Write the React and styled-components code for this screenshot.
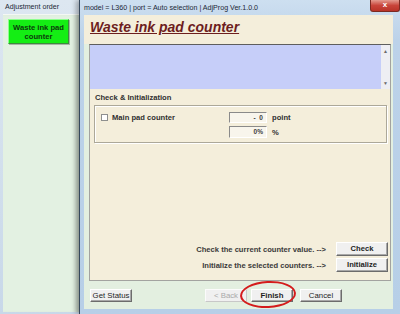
import React from 'react';
import styled, { createGlobalStyle } from 'styled-components';

const GlobalStyle = createGlobalStyle`
  html, body {
    margin: 0;
    padding: 0;
  }
  body {
    width: 400px;
    height: 314px;
    overflow: hidden;
    background: #7d9cc0;
    font-family: "Liberation Sans", Arial, sans-serif;
  }
`;

const Desktop = styled.div`
  display: flex;
  width: 400px;
  height: 314px;
`;

// left window : "Adjustment order"
const LeftWindow = styled.div`
  width: 79px;
  flex-shrink: 0;
  display: flex;
  flex-direction: column;
  box-sizing: border-box;
  padding: 0 0 2px 3px;
  background: linear-gradient(#dde7f1, #c8d8e9);
`;

const TitleBar = styled.div`
  height: ${p => p.h}px;
  flex-shrink: 0;
  display: flex;
  align-items: center;
  padding-left: ${p => p.pad}px;
  font-size: 7.1px;
  color: #1c2836;
  white-space: nowrap;
`;

const LeftBody = styled.div`
  flex: 1;
  background: #e3f1e2;
  border-top: 1px solid #f4f8f4;
  padding: 4px 0 0 5px;
  box-shadow: inset -5px 0 5px -3px rgba(0, 0, 0, 0.15);
`;

const OrderButton = styled.div`
  width: 61px;
  height: 25px;
  box-sizing: border-box;
  padding-top: 3px;
  background: #14ee14;
  border: 1px solid;
  border-color: #8dff8d #3d8a3d #3d8a3d #8dff8d;
  box-shadow: 1px 1px 0 #a5b4a5;
  color: #0c3a0c;
  font-size: 7.6px;
  font-weight: bold;
  line-height: 9px;
  text-align: center;
`;

// right window : the wizard
const RightWindow = styled.div`
  flex: 1;
  position: relative;
  z-index: 1;
  display: flex;
  flex-direction: column;
  background: linear-gradient(#cddff0, #bcd2e9 40px, #b7cfe7);
  border-left: 1px solid #36485c;
  box-shadow: -3px 0 5px rgba(0, 0, 0, 0.3);
`;

const CloseButton = styled.div`
  width: 30px;
  height: 12px;
  align-self: flex-start;
  margin-left: auto;
  background: linear-gradient(#e49b8f, #c8443a 50%, #b93328);
  border: 1px solid #7b2a22;
  border-top: none;
  border-radius: 0 0 3px 3px;
  box-sizing: border-box;
  color: #fff;
  font-size: 8px;
  font-weight: bold;
  line-height: 10px;
  text-align: center;
`;

const Body = styled.div`
  flex: 1;
  margin: 0 7px 5px 4px;
  display: flex;
  flex-direction: column;
  background: #e3efe0;
`;

const Header = styled.div`
  height: 29px;
  box-sizing: border-box;
  padding: 4px 0 0 6px;
  background: #f4eedb;
`;

const Title = styled.div`
  font-size: 14px;
  font-weight: bold;
  font-style: italic;
  text-decoration: underline;
  line-height: 16px;
  color: #6d1e1e;
`;

const Main = styled.div`
  flex: 1;
  display: flex;
  padding: 0 2px 0 5px;
`;

const Panel = styled.div`
  flex: 1;
  display: flex;
  flex-direction: column;
  background: #f4eedb;
  border: 1px solid #a3a3a0;
  border-top-color: #5e5e5e;
`;

const Memo = styled.div`
  height: 44px;
  flex-shrink: 0;
  display: flex;
  justify-content: flex-end;
  background: #c6cef9;
`;

const ScrollBar = styled.div`
  width: 9px;
  display: flex;
  flex-direction: column;
  justify-content: space-between;
  align-items: center;
  background: #eeeef3;
  color: #6a6a6a;
  font-size: 5px;
  line-height: 8px;
  padding: 2px 0;
  box-sizing: border-box;
`;

const GroupLabel = styled.div`
  margin: 4px 0 0 5px;
  font-size: 7.6px;
  font-weight: bold;
  line-height: 9px;
  color: #303030;
`;

const Group = styled.div`
  margin: 3px 3px 0 4px;
  height: 38px;
  box-sizing: border-box;
  padding: 6px 0 0 6px;
  border: 1px solid #aca899;
  box-shadow: inset 1px 1px 0 #fff, 1px 1px 0 #fff;
  display: grid;
  grid-template-columns: 7px 113px 38px auto;
  grid-template-rows: 11px 12px;
  column-gap: 4px;
  row-gap: 3px;
  align-items: center;
  align-content: start;
`;

const CheckBox = styled.div`
  width: 7px;
  height: 7px;
  box-sizing: border-box;
  background: #fff;
  border: 1px solid #8e8f8f;
`;

const Label = styled.div`
  font-size: 7.6px;
  font-weight: bold;
  color: #303030;
  white-space: nowrap;
`;

const Field = styled.div`
  grid-column: 3;
  height: ${p => p.h}px;
  box-sizing: border-box;
  padding-right: 3px;
  background: #f8f5ec;
  border: 1px solid;
  border-color: #8a8a8a #ffffff #ffffff #8a8a8a;
  font-size: 6.5px;
  font-weight: bold;
  color: #404040;
  text-align: right;
  line-height: ${p => p.h - 2}px;
  white-space: pre;
`;

const Unit = styled(Label)`
  grid-column: 4;
  padding-left: 1px;
`;

const Actions = styled.div`
  margin-top: auto;
  padding: 0 2px 8px 0;
  display: grid;
  grid-template-columns: auto 52px;
  column-gap: 10px;
  row-gap: 2px;
  justify-content: end;
  align-items: center;
`;

const Hint = styled.div`
  font-size: 7.6px;
  font-weight: bold;
  color: #3a3a3a;
  text-align: right;
  white-space: nowrap;
`;

const Button = styled.div`
  width: ${p => p.w}px;
  height: ${p => p.h}px;
  box-sizing: border-box;
  background: #f0f0f0;
  border: 1px solid;
  border-color: ${p => (p.disabled ? '#fbfbfb #c8c8c8 #c8c8c8 #fbfbfb' : '#ffffff #6c6c6c #6c6c6c #ffffff')};
  box-shadow: ${p => (p.disabled ? 'none' : 'inset -1px -1px 0 #a8a8a8')};
  color: ${p => (p.disabled ? '#a9a9a9' : '#1e1e1e')};
  font-size: ${p => p.fs || 7.6}px;
  font-weight: ${p => (p.bold ? 'bold' : 'normal')};
  line-height: ${p => p.h - 2}px;
  text-align: center;
  white-space: nowrap;
  margin-left: ${p => p.ml || 0}px;
`;

const Footer = styled.div`
  height: 28px;
  flex-shrink: 0;
  position: relative;
  display: flex;
  align-items: center;
  padding-left: 6px;
`;

const Marker = styled.div`
  position: absolute;
  left: 156px;
  top: 0px;
  width: 56px;
  height: 27px;
  box-sizing: border-box;
  border: 2px solid #d41c1c;
  border-radius: 50%;
  transform: rotate(-3deg);
  pointer-events: none;
`;

export default function App() {
  return (
    <Desktop>
      <GlobalStyle />
      <LeftWindow>
        <TitleBar h={14} pad={2}>Adjustment order</TitleBar>
        <LeftBody>
          <OrderButton>Waste ink pad<br />counter</OrderButton>
        </LeftBody>
      </LeftWindow>

      <RightWindow>
        <TitleBar h={15} pad={4}>
          model = L360 | port = Auto selection | AdjProg Ver.1.0.0
          <CloseButton>x</CloseButton>
        </TitleBar>
        <Body>
          <Header>
            <Title>Waste ink pad counter</Title>
          </Header>
          <Main>
            <Panel>
              <Memo>
                <ScrollBar>
                  <span>▲</span>
                  <span>▼</span>
                </ScrollBar>
              </Memo>
              <GroupLabel>Check &amp; Initialization</GroupLabel>
              <Group>
                <CheckBox />
                <Label>Main pad counter</Label>
                <Field h={11}>{'-  0'}</Field>
                <Unit>point</Unit>
                <Field h={12}>0%</Field>
                <Unit>%</Unit>
              </Group>
              <Actions>
                <Hint>Check the current counter value. --&gt;</Hint>
                <Button w={52} h={14} bold>Check</Button>
                <Hint>Initialize the selected counters. --&gt;</Hint>
                <Button w={52} h={14} bold>Initialize</Button>
              </Actions>
            </Panel>
          </Main>
          <Footer>
            <Button w={42} h={13} fs={7.8}>Get Status</Button>
            <Button w={42} h={13} fs={7.8} ml={73} disabled>&lt; Back</Button>
            <Button w={42} h={13} fs={7.8} ml={4} bold>Finish</Button>
            <Button w={42} h={13} fs={7.8} ml={7}>Cancel</Button>
            <Marker />
          </Footer>
        </Body>
      </RightWindow>
    </Desktop>
  );
}
